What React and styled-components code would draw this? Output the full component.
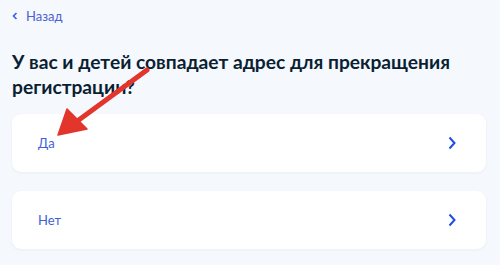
import React from 'react'
import styled, { createGlobalStyle } from 'styled-components'

const GlobalStyle = createGlobalStyle`
  html, body {
    margin: 0;
    padding: 0;
    background: #f5f8fc;
    font-family: Lato, "Noto Sans", sans-serif;
  }
`

const Page = styled.div`
  position: relative;
  width: 500px;
  height: 265px;
  padding: 0 14px 0 12px;
  box-sizing: border-box;
  overflow: hidden;
`

const Back = styled.div`
  display: flex;
  align-items: center;
  gap: 8px;
  padding-top: 8px;
  height: 16px;
  color: #4a62d6;
  font-size: 13px;
`

const Title = styled.h1`
  margin: 25px 0 0;
  font-size: 19.2px;
  line-height: 25px;
  font-weight: 700;
  color: #0b1f33;
`

const List = styled.div`
  display: flex;
  flex-direction: column;
  gap: 19px;
  margin-top: 15px;
`

const Card = styled.div`
  display: flex;
  align-items: center;
  justify-content: space-between;
  height: 58px;
  padding: 0 30px 0 26px;
  background: #fff;
  border-radius: 9px;
  box-shadow: 0 1px 3px rgba(100, 130, 180, 0.08);
  color: #3e5fd9;
  font-size: 13px;
`

const Pointer = styled.svg`
  position: absolute;
  left: 0;
  top: 0;
  pointer-events: none;
`

const Chevron = ({ left }) => (
  <svg width={left ? 6 : 8} height={left ? 8 : 14} viewBox={left ? '0 0 6 8' : '0 0 8 14'}>
    {left ? (
      <path d="M4.5 1 L1.5 4 L4.5 7" fill="none" stroke="#3d5ed8" strokeWidth="1.6" />
    ) : (
      <path d="M1.5 1.5 L6.5 7 L1.5 12.5" fill="none" stroke="#1d4fe0" strokeWidth="2" />
    )}
  </svg>
)

export default function App() {
  return (
    <>
      <GlobalStyle />
      <Page>
        <Back>
          <Chevron left />
          <span>Назад</span>
        </Back>
        <Title>У вас и детей совпадает адрес для прекращения регистрации?</Title>
        <List>
          <Card>
            <span>Да</span>
            <Chevron />
          </Card>
          <Card>
            <span>Нет</span>
            <Chevron />
          </Card>
        </List>
        <Pointer width="500" height="265">
          <line x1="147" y1="70" x2="76" y2="122" stroke="#e2352b" strokeWidth="5" strokeLinecap="round" />
          <polygon points="58,135 67,109 87,129" fill="#e2352b" stroke="#e2352b" strokeWidth="1.5" strokeLinejoin="round" />
        </Pointer>
      </Page>
    </>
  )
}
